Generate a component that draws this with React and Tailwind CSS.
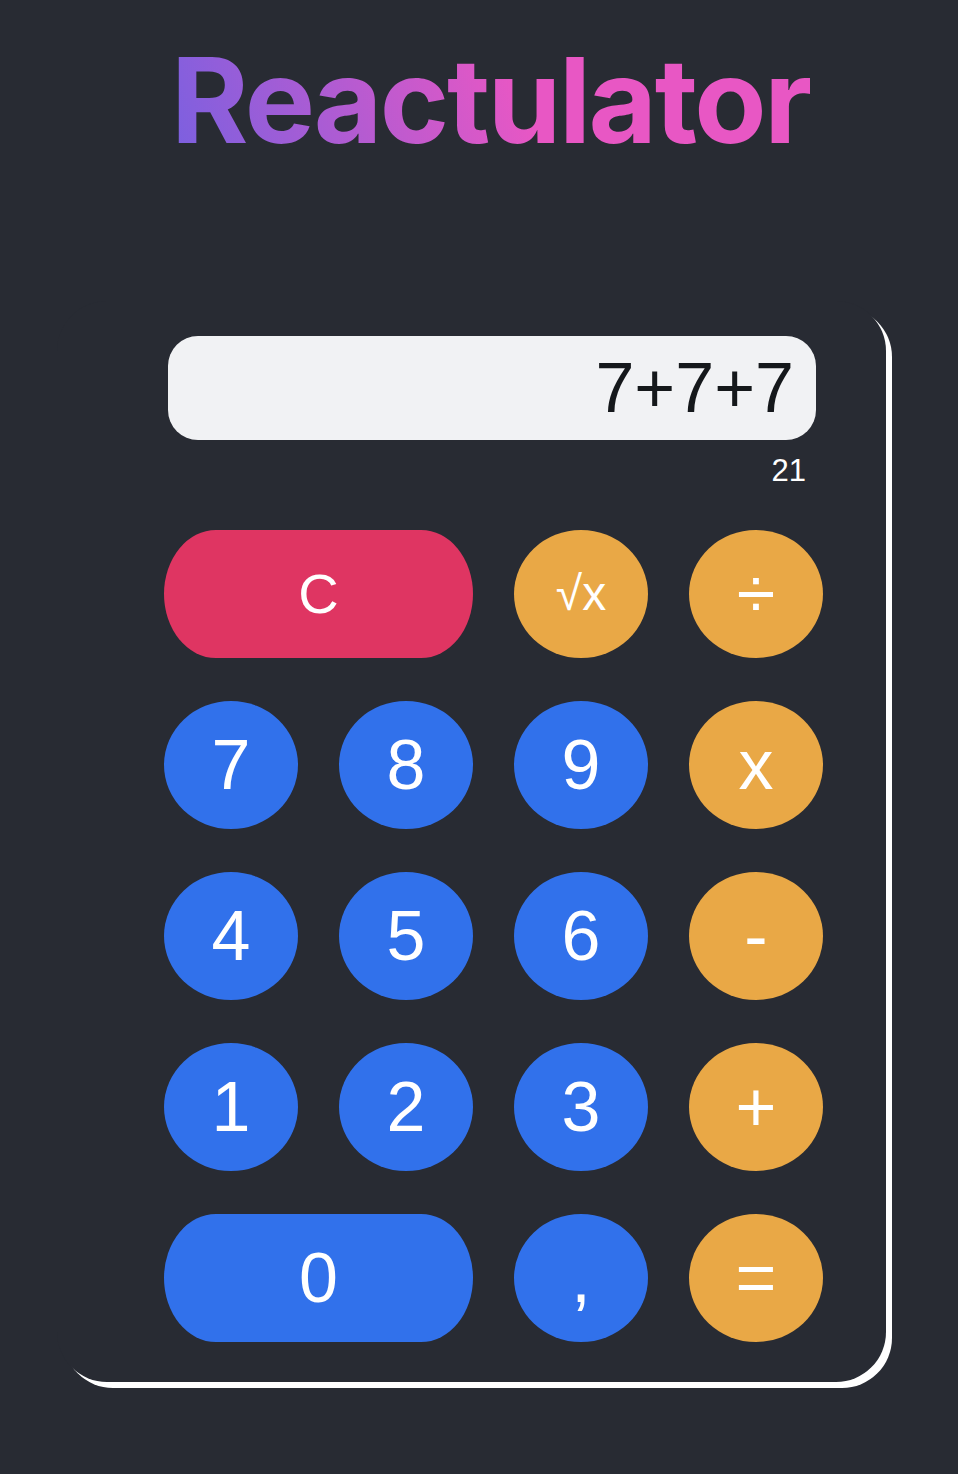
const keys = [
  { label: "C", kind: "clear", wide: true },
  { label: "√x", kind: "op", small: true },
  { label: "÷", kind: "op" },
  { label: "7" },
  { label: "8" },
  { label: "9" },
  { label: "x", kind: "op" },
  { label: "4" },
  { label: "5" },
  { label: "6" },
  { label: "-", kind: "op" },
  { label: "1" },
  { label: "2" },
  { label: "3" },
  { label: "+", kind: "op" },
  { label: "0", wide: true },
  { label: "," },
  { label: "=", kind: "op" },
];

const colorFor = (kind) => {
  if (kind === "clear") return "bg-[#df3562]";
  if (kind === "op") return "bg-[#e9a846]";
  return "bg-[#3171eb]";
};

const Key = ({ k }) => (
  <button
    className={`${colorFor(k.kind)} ${
      k.wide ? "col-span-2 rounded-[52px/64px]" : "rounded-[50%]"
    } h-[128px] flex items-center justify-center text-white leading-none ${
      k.label === "C" ? "text-[56px]" : k.small ? "text-[48px]" : "text-[70px]"
    }`}
  >
    {k.label}
  </button>
);

export default function App() {
  return (
    <div
      className="min-h-screen bg-[#282b33] flex flex-col items-center pb-[93px]"
      style={{ fontFamily: '"Liberation Sans", Arial, sans-serif' }}
    >
      <h1
        className="mt-[41px] ml-[23px] text-[118px] leading-none font-bold tracking-[-0.02em] bg-[linear-gradient(70deg,#7a60e0_0%,#e857c4_55%,#e857c4_100%)] bg-clip-text text-transparent"
        style={{ fontFamily: "Inter, sans-serif" }}
      >
        Reactulator
      </h1>

      <div className="mt-[142px] -ml-[15px] w-[829px] rounded-[50px] shadow-[6px_6px_0_#ffffff] bg-[#282b33] pt-[35px] pl-[107px] pr-[63px] pb-[40px]">
        <div className="ml-[4px] mr-[7px] h-[104px] rounded-[30px] bg-[#f1f2f4] flex items-center justify-end pr-[22px]">
          <span className="text-[70px] leading-none text-[#15181b]">7+7+7</span>
        </div>
        <div className="mt-[15px] mb-[44px] pr-[17px] text-right text-[31px] leading-none text-white">
          21
        </div>
        <div className="grid grid-cols-4 gap-x-[41px] gap-y-[43px]">
          {keys.map((k) => (
            <Key key={k.label} k={k} />
          ))}
        </div>
      </div>
    </div>
  );
}
